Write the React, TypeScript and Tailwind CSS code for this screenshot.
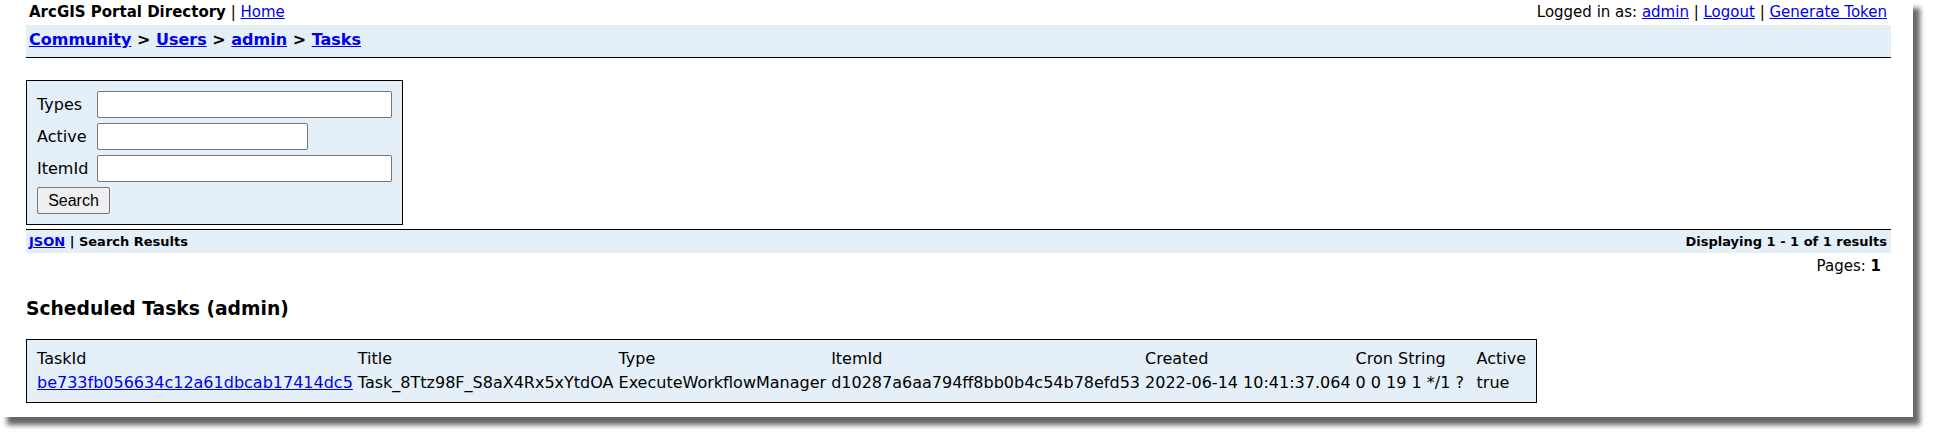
const link = "text-[#0000ee] underline";

function SearchForm() {
  return (
    <div className="mt-[22px] w-fit border border-black bg-[#e5eff7] p-[10px]">
      <div className="flex flex-col gap-[5px] text-[16px]">
        <div className="flex h-[27px] items-center">
          <label className="w-[60px]">Types</label>
          <input className="h-[27px] w-[295px] rounded-[2px] border border-[#767676] bg-white" />
        </div>
        <div className="flex h-[27px] items-center">
          <label className="w-[60px]">Active</label>
          <input className="h-[27px] w-[211px] rounded-[2px] border border-[#767676] bg-white" />
        </div>
        <div className="flex h-[27px] items-center">
          <label className="w-[60px]">ItemId</label>
          <input className="h-[27px] w-[295px] rounded-[2px] border border-[#767676] bg-white" />
        </div>
        <div className="flex h-[27px] items-center">
          <button className="h-[27px] w-[73px] rounded-[2px] border border-[#767676] bg-[#efefef] font-['Liberation_Sans',Arial,sans-serif] text-[16px]">
            Search
          </button>
        </div>
      </div>
    </div>
  );
}

const headers = ["TaskId", "Title", "Type", "ItemId", "Created", "Cron String", "Active"];

function TasksTable() {
  return (
    <div className="mt-[19px] w-fit border border-black bg-[#e5eff7] px-[10px] py-[7px]">
      <table className="border-collapse text-[16px] leading-[24px]">
        <thead>
          <tr>
            {headers.map((h, i) => (
              <th
                key={h}
                className={`p-0 text-left font-normal ${i < headers.length - 1 ? "pr-[5px]" : ""} ${
                  h === "Cron String" ? "w-[121px]" : ""
                }`}
              >
                {h}
              </th>
            ))}
          </tr>
        </thead>
        <tbody>
          <tr>
            <td className="p-0 pr-[5px]">
              <a href="#" className={link}>be733fb056634c12a61dbcab17414dc5</a>
            </td>
            <td className="p-0 pr-[5px]">Task_8Ttz98F_S8aX4Rx5xYtdOA</td>
            <td className="p-0 pr-[5px]">ExecuteWorkflowManager</td>
            <td className="p-0 pr-[5px]">d10287a6aa794ff8bb0b4c54b78efd53</td>
            <td className="p-0 pr-[5px]">2022-06-14 10:41:37.064</td>
            <td className="p-0 pr-[5px]">0 0 19 1 */1 ?</td>
            <td className="p-0">true</td>
          </tr>
        </tbody>
      </table>
    </div>
  );
}

export default function App() {
  return (
    <div className="h-[437px] w-[1933px] bg-white">
      <div className="h-[417px] w-[1913px] bg-white pl-[26px] pr-[22px] font-['DejaVu_Sans',Verdana,sans-serif] text-black shadow-[7px_8px_5px_rgba(0,0,0,0.6)]">
        {/* top row */}
        <div className="flex h-[25px] items-center justify-between px-[3px] pr-[4px] text-[15px]">
          <div>
            <span className="font-bold">ArcGIS Portal Directory</span> |{" "}
            <a href="#" className={link}>Home</a>
          </div>
          <div>
            Logged in as: <a href="#" className={link}>admin</a> |{" "}
            <a href="#" className={link}>Logout</a> |{" "}
            <a href="#" className={link}>Generate Token</a>
          </div>
        </div>

        {/* breadcrumbs */}
        <div className="border-b border-black bg-[#e5eff7] pb-[7px] pl-[3px] pt-[5px] text-[16px] font-bold leading-[20px]">
          <a href="#" className={link}>Community</a> &gt; <a href="#" className={link}>Users</a> &gt;{" "}
          <a href="#" className={link}>admin</a> &gt; <a href="#" className={link}>Tasks</a>
        </div>

        <SearchForm />

        {/* results bar */}
        <div className="mt-[4px] flex justify-between border-t border-black bg-[#e5eff7] pb-[3px] pl-[3px] pr-[4px] pt-[4px] text-[13px] font-bold leading-[16px]">
          <div>
            <a href="#" className={link}>JSON</a> | Search Results
          </div>
          <div>Displaying 1 - 1 of 1 results</div>
        </div>

        <div className="pr-[10px] pt-[3px] text-right text-[15px] leading-[20px]">
          Pages: <span className="font-bold">1</span>
        </div>

        <h3 className="mt-[22px] text-[18.72px] font-bold leading-[22px]">Scheduled Tasks (admin)</h3>

        <TasksTable />
      </div>
    </div>
  );
}
